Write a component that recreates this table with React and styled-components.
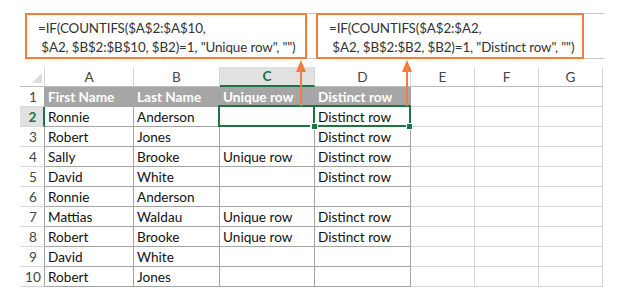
import React from "react";
import styled, { createGlobalStyle, css } from "styled-components";

const GlobalStyle = createGlobalStyle`
  html, body {
    margin: 0;
    padding: 0;
    background: #ffffff;
  }
  body {
    font-family: "Lato", "Open Sans", sans-serif;
  }
`;

const ORANGE = "#f47d3b";
const GREEN = "#217346";
const TABLE_LINE = "#a3a3a3";
const GRID_LINE = "#d6d6d6";
const FONT_SIZE = "13.6px";

const Page = styled.div`
  position: relative;
  width: 631px;
  height: 308px;
  padding-top: 13px;
  box-sizing: border-box;
  overflow: hidden;
`;

const FormulaBar = styled.div`
  display: flex;
  gap: 9px;
  margin-left: 25px;
  width: 579px;
  height: 44px;
  border-top: 1px solid #c9c9c9;
  border-bottom: 1px solid #c9c9c9;
`;

const FormulaBox = styled.div`
  box-sizing: border-box;
  width: ${(p) => p.$width}px;
  height: 46px;
  margin: -1px 0;
  border: 2px solid ${ORANGE};
  background: #ffffff;
  padding: 4px 0 0 11px;
  font-size: 13.4px;
  letter-spacing: -0.12px;
  line-height: 19px;
  color: #333333;
  white-space: pre;
`;

const Sheet = styled.div`
  display: grid;
  grid-template-columns: 25px 89px 86px 95px 96px 64px 64px 64px;
  grid-auto-rows: 20px;
  margin: 8px 0 0 20px;
  width: 583px;
`;

const ColHead = styled.div`
  box-sizing: border-box;
  display: flex;
  align-items: center;
  justify-content: center;
  font-size: ${FONT_SIZE};
  color: #444444;
  border-right: 1px solid ${GRID_LINE};
  border-bottom: 1px solid #bdbdbd;
  ${(p) =>
    p.$active &&
    css`
      background: #e1e1e1;
      color: ${GREEN};
      font-weight: 700;
      border-bottom: 2px solid ${GREEN};
    `}
`;

const Corner = styled.div`
  position: relative;
  box-sizing: border-box;
  border-right: 1px solid ${GRID_LINE};
  border-bottom: 1px solid #bdbdbd;

  &::after {
    content: "";
    position: absolute;
    right: 2px;
    bottom: 3px;
    width: 0;
    height: 0;
    border-left: 10px solid transparent;
    border-bottom: 10px solid #dcdcdc;
  }
`;

const RowHead = styled.div`
  box-sizing: border-box;
  display: flex;
  align-items: center;
  justify-content: center;
  padding-left: 2px;
  font-size: ${FONT_SIZE};
  color: #444444;
  border-bottom: 1px solid ${GRID_LINE};
  border-right: 1px solid ${TABLE_LINE};
  ${(p) =>
    p.$active &&
    css`
      background: #e1e1e1;
      color: ${GREEN};
      font-weight: 700;
      border-right: 2px solid ${GREEN};
    `}
`;

const Cell = styled.div`
  position: relative;
  box-sizing: border-box;
  display: flex;
  align-items: center;
  padding-left: 3px;
  font-size: ${FONT_SIZE};
  color: #111111;
  white-space: nowrap;
  border-right: 1px solid ${(p) => (p.$table ? TABLE_LINE : GRID_LINE)};
  border-bottom: 1px solid ${(p) => (p.$table ? TABLE_LINE : GRID_LINE)};
  ${(p) =>
    p.$head &&
    css`
      background: #a6a6a6;
      color: #ffffff;
      font-weight: 700;
      border-right-color: #a6a6a6;
    `}
  ${(p) =>
    p.$selected &&
    css`
      &::before {
        content: "";
        position: absolute;
        left: -2px;
        top: -2px;
        right: -1px;
        bottom: -1px;
        border: 2px solid ${GREEN};
        z-index: 2;
      }
    `}
`;

const Handle = styled.span`
  position: absolute;
  z-index: 3;
  bottom: -4px;
  ${(p) => (p.$side === "left" ? "left: -4px;" : "right: -3px;")}
  width: 5px;
  height: 5px;
  background: ${GREEN};
  border: 1px solid #ffffff;
`;

const Arrow = styled.div`
  position: absolute;
  z-index: 5;
  left: ${(p) => p.$x - 5}px;
  top: 60px;
  width: 10px;
  height: 46px;

  &::before {
    content: "";
    position: absolute;
    left: 0;
    top: 0;
    border-left: 5px solid transparent;
    border-right: 5px solid transparent;
    border-bottom: 12px solid ${ORANGE};
  }

  &::after {
    content: "";
    position: absolute;
    left: 4px;
    top: 10px;
    width: 2px;
    bottom: 0;
    background: ${ORANGE};
  }
`;

const columns = ["A", "B", "C", "D", "E", "F", "G"];

const rows = [
  ["First Name", "Last Name", "Unique row", "Distinct row"],
  ["Ronnie", "Anderson", "", "Distinct row"],
  ["Robert", "Jones", "", "Distinct row"],
  ["Sally", "Brooke", "Unique row", "Distinct row"],
  ["David", "White", "", "Distinct row"],
  ["Ronnie", "Anderson", "", ""],
  ["Mattias", "Waldau", "Unique row", "Distinct row"],
  ["Robert", "Brooke", "Unique row", "Distinct row"],
  ["David", "White", "", ""],
  ["Robert", "Jones", "", ""],
];

export default function App() {
  return (
    <Page>
      <GlobalStyle />
      <FormulaBar>
        <FormulaBox $width={282}>
          {"=IF(COUNTIFS($A$2:$A$10,\n $A2, $B$2:$B$10, $B2)=1, \"Unique row\", \"\")"}
        </FormulaBox>
        <FormulaBox $width={268}>
          {"=IF(COUNTIFS($A$2:$A2,\n $A2, $B$2:$B2, $B2)=1, \"Distinct row\", \"\")"}
        </FormulaBox>
      </FormulaBar>

      <Sheet>
        <Corner />
        {columns.map((c) => (
          <ColHead key={c} $active={c === "C"}>
            {c}
          </ColHead>
        ))}

        {rows.map((row, r) => (
          <React.Fragment key={r}>
            <RowHead $active={r === 1}>{r + 1}</RowHead>
            {row.map((value, c) => (
              <Cell
                key={c}
                $table
                $head={r === 0}
                $selected={r === 1 && (c === 2 || c === 3)}
              >
                {value}
                {r === 1 && c === 2 && <Handle $side="right" />}
                {r === 1 && c === 3 && <Handle $side="left" />}
                {r === 1 && c === 3 && <Handle $side="right" />}
              </Cell>
            ))}
            {[4, 5, 6].map((c) => (
              <Cell key={c} />
            ))}
          </React.Fragment>
        ))}
      </Sheet>

      <Arrow $x={301} />
      <Arrow $x={407} />
    </Page>
  );
}
